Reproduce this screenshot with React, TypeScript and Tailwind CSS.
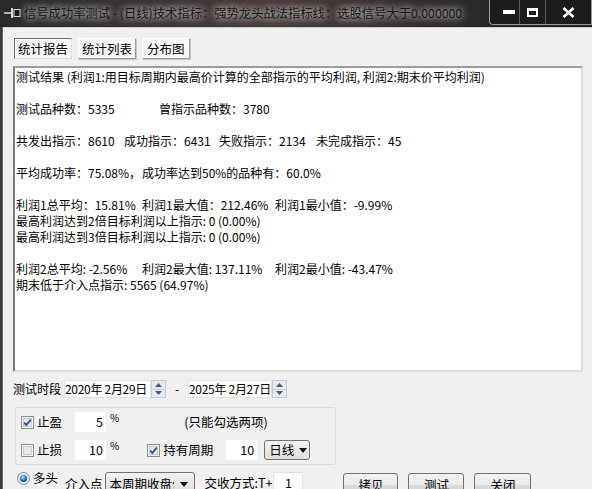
import React from 'react'

const ui = { fontFamily: '"Noto Sans CJK SC", "Noto Sans", sans-serif' }

function Check({ on }: { on: boolean }) {
  return (
    <svg width="13" height="13" viewBox="0 0 13 13" className="shrink-0">
      <rect x="0.5" y="0.5" width="12" height="12" fill="#f4f4f4" stroke="#8e8f8f" />
      <rect x="2.5" y="2.5" width="8" height="8" fill="#e6e9ee" stroke="#c9ccd2" />
      {on && <path d="M3.2 6.6 L5.3 9 L9.8 3.6" fill="none" stroke="#3a4f8c" strokeWidth="1.9" />}
    </svg>
  )
}

function Radio() {
  return (
    <svg width="13" height="13" viewBox="0 0 13 13" className="shrink-0">
      <defs>
        <radialGradient id="rg" cx="0.4" cy="0.35" r="0.6">
          <stop offset="0" stopColor="#bfe6ff" />
          <stop offset="0.6" stopColor="#2a8ad4" />
          <stop offset="1" stopColor="#0f4c8c" />
        </radialGradient>
      </defs>
      <circle cx="6.5" cy="6.5" r="6" fill="#eaeaea" stroke="#8e8f8f" />
      <circle cx="6.5" cy="6.5" r="3.6" fill="url(#rg)" />
    </svg>
  )
}

function Spin() {
  return (
    <div className="flex flex-col w-[15px] h-[18px] border border-[#c4cbd6] bg-[#e6ebf2]">
      <div className="flex-1 flex items-center justify-center border-b border-[#c4cbd6]">
        <svg width="7" height="4" viewBox="0 0 7 4"><path d="M0 4 L3.5 0 L7 4Z" fill="#4b5a78" /></svg>
      </div>
      <div className="flex-1 flex items-center justify-center">
        <svg width="7" height="4" viewBox="0 0 7 4"><path d="M0 0 L3.5 4 L7 0Z" fill="#4b5a78" /></svg>
      </div>
    </div>
  )
}

function Arrow() {
  return (
    <svg width="8" height="5" viewBox="0 0 8 5"><path d="M0 0 L4 5 L8 0Z" fill="#111" /></svg>
  )
}

function Seg({ w, children }: { w?: number; children: React.ReactNode }) {
  return (
    <span className="inline-block whitespace-pre" style={w ? { width: w } : undefined}>
      {children}
    </span>
  )
}

export default function App() {
  return (
    <div className="w-[592px] h-[489px] overflow-hidden flex flex-col bg-[#2b2b2b]" style={ui}>
      {/* title bar */}
      <div className="h-[27px] shrink-0 flex items-start relative bg-[linear-gradient(90deg,#2a2a2a_0%,#3a3434_25%,#4a3a3a_45%,#3a3333_65%,#262626_85%,#1e1e1e_100%)]">
        <div className="flex items-center h-[26px] pl-[4px] gap-[3px]">
          <svg width="17" height="12" viewBox="0 0 17 12">
            <path d="M0 6 H8" stroke="#d8d8d8" strokeWidth="1.5" />
            <path d="M8 1 V11" stroke="#d8d8d8" strokeWidth="2" />
            <rect x="10" y="2.5" width="6" height="7" fill="#1a1a1a" stroke="#d8d8d8" />
          </svg>
          <span className="text-[12.3px] text-[#151515] [text-shadow:0_0_6px_rgba(255,255,255,0.9),0_0_10px_rgba(255,255,255,0.5)] whitespace-nowrap">
            信号成功率测试 - (日线)技术指标：强势龙头战法指标线：选股信号大于0.000000
          </span>
        </div>
        <div className="ml-auto flex h-[25px] border border-t-0 border-[#9a9a9a] rounded-bl-[4px] bg-[#1c1c1c] pl-[8px]">
          <div className="w-[22px] flex items-center justify-center border-r border-[#5a5a5a]">
            <div className="w-[12px] h-[4px] bg-white" />
          </div>
          <div className="w-[26px] flex items-center justify-center border-r border-[#5a5a5a]">
            <div className="w-[11px] h-[9px] border-2 border-white border-t-[3px]" />
          </div>
          <div className="w-[45px] flex items-center justify-center">
            <svg width="13" height="11" viewBox="0 0 13 11">
              <path d="M1.5 1 L11.5 10 M11.5 1 L1.5 10" stroke="#fff" strokeWidth="2.6" />
            </svg>
          </div>
        </div>
      </div>

      {/* body */}
      <div className="flex-1 flex">
        <div className="w-[3px] bg-[#3a3a3a] border-r border-[#6a6a6a]" />
        <div className="flex-1 bg-[#f0f0f0] border-t border-[#cfcfcf] pt-[10px] pl-[10px] pr-[4px] flex flex-col">
          {/* tabs */}
          <div className="flex gap-[6px] pl-[1px] h-[21px] text-[12.5px] leading-[19px] text-black">
            <div className="px-[3px] border border-t-[#6d6d6d] border-l-[#6d6d6d] border-r-[#dcdcdc] border-b-[#dcdcdc] bg-[#f6f6f6]">统计报告</div>
            <div className="px-[3px] border border-t-white border-l-white border-r-[#9a9a9a] border-b-[#9a9a9a] bg-[#f7f7f7] shadow-[1px_1px_0_#c8c8c8]">统计列表</div>
            <div className="px-[4px] border border-t-white border-l-white border-r-[#9a9a9a] border-b-[#9a9a9a] bg-[#f7f7f7] shadow-[1px_1px_0_#c8c8c8]">分布图</div>
          </div>

          {/* report text */}
          <div className="mt-[7px] w-[570px] h-[306px] bg-white border-2 border-t-[#9c9c9c] border-l-[#7a7a7a] border-r-[#dedede] border-b-[#dedede] pl-[1px] pt-[1px] text-[12px] leading-[16px] text-black overflow-hidden">
            <div><Seg>测试结果 (利润1:用目标周期内最高价计算的全部指示的平均利润, 利润2:期末价平均利润)</Seg></div>
            <div>&nbsp;</div>
            <div><Seg w={143}>测试品种数：5335</Seg><Seg>曾指示品种数：3780</Seg></div>
            <div>&nbsp;</div>
            <div><Seg w={108}>共发出指示：8610</Seg><Seg w={95}>成功指示：6431</Seg><Seg w={97}>失败指示：2134</Seg><Seg>未完成指示：45</Seg></div>
            <div>&nbsp;</div>
            <div><Seg w={126}>平均成功率：75.08%，</Seg><Seg>成功率达到50%的品种有：60.0%</Seg></div>
            <div>&nbsp;</div>
            <div><Seg w={126}>利润1总平均：15.81%</Seg><Seg w={133}>利润1最大值：212.46%</Seg><Seg>利润1最小值：-9.99%</Seg></div>
            <div><Seg>最高利润达到2倍目标利润以上指示: 0 (0.00%)</Seg></div>
            <div><Seg>最高利润达到3倍目标利润以上指示: 0 (0.00%)</Seg></div>
            <div>&nbsp;</div>
            <div><Seg w={126}>利润2总平均: -2.56%</Seg><Seg w={133}>利润2最大值: 137.11%</Seg><Seg>利润2最小值: -43.47%</Seg></div>
            <div><Seg>期末低于介入点指示: 5565 (64.97%)</Seg></div>
          </div>

          {/* date range */}
          <div className="mt-[8px] flex items-center h-[18px] text-[12px] text-black">
            <span className="w-[51px] whitespace-nowrap">测试时段</span>
            <div className="w-[87px] h-[18px] bg-white border border-[#e2e2e2] leading-[16px] text-[12px] tracking-[-0.3px] whitespace-pre overflow-hidden">2020年 2月29日</div>
            <Spin />
            <span className="w-[22px] text-center">-</span>
            <div className="w-[84px] h-[18px] bg-white border border-[#e2e2e2] leading-[16px] text-[12px] tracking-[-0.3px] whitespace-pre overflow-hidden">2025年 2月27日</div>
            <Spin />
          </div>

          {/* options group */}
          <div className="mt-[9px] ml-[2px] w-[321px] h-[58px] border border-[#d5dbe0] rounded-[3px] flex flex-col text-[12.5px] text-black">
            <div className="flex items-center h-[20px] mt-[4px]">
              <div className="ml-[5px]"><Check on /></div>
              <span className="ml-[3px] w-[38px]">止盈</span>
              <div className="w-[31px] h-[20px] bg-white text-right pr-[3px] leading-[20px]">5</div>
              <span className="ml-[4px] self-start text-[10px] leading-[12px]">%</span>
              <span className="ml-[65px]">(只能勾选两项)</span>
            </div>
            <div className="flex items-center h-[20px] mt-[8px]">
              <div className="ml-[5px]"><Check on={false} /></div>
              <span className="ml-[3px] w-[38px]">止损</span>
              <div className="w-[31px] h-[20px] bg-white text-right pr-[3px] leading-[20px]">10</div>
              <span className="ml-[4px] self-start text-[10px] leading-[12px]">%</span>
              <div className="ml-[28px]"><Check on /></div>
              <span className="ml-[3px] w-[63px]">持有周期</span>
              <div className="w-[31px] h-[20px] bg-white text-right pr-[3px] leading-[20px]">10</div>
              <div className="ml-[7px] w-[46px] h-[20px] border border-[#707070] rounded-[3px] bg-[linear-gradient(#f2f2f2,#e0e0e0)] flex items-center pl-[4px] gap-[5px]">
                <span>日线</span>
                <Arrow />
              </div>
            </div>
          </div>

          {/* bottom row */}
          <div className="mt-[6px] flex items-start text-[12.5px] text-black">
            <div className="ml-[4px] mt-[1px]"><Radio /></div>
            <span className="ml-[3px] leading-[14px]">多头</span>
            <span className="ml-[7px] mt-[5px] leading-[16px]">介入点</span>
            <div className="ml-[2px] mt-[1px] w-[90px] h-[22px] border border-[#707070] rounded-[3px] bg-[linear-gradient(#f2f2f2,#dcdcdc)] flex items-center">
              <span className="w-[68px] overflow-hidden whitespace-nowrap pl-[4px] pt-[2px]">本周期收盘价</span>
              <div className="flex-1 flex justify-center pt-[2px]"><Arrow /></div>
            </div>
            <span className="ml-[10px] mt-[4px] leading-[16px] whitespace-nowrap">交收方式:T+</span>
            <div className="ml-[1px] mt-[1px] w-[30px] h-[20px] bg-white border border-[#e2e2e2] text-center leading-[20px]">1</div>
            <div className="ml-[40px] mt-[2px] flex gap-[10px]">
              <div className="w-[55px] h-[23px] border border-[#707070] rounded-[3px] bg-[linear-gradient(#f2f2f2_0%,#ebebeb_50%,#dddddd_51%,#cfcfcf_100%)] text-center leading-[22px]">拷贝</div>
              <div className="w-[56px] h-[23px] border border-[#707070] rounded-[3px] bg-[linear-gradient(#f2f2f2_0%,#ebebeb_50%,#dddddd_51%,#cfcfcf_100%)] text-center leading-[22px]">测试</div>
              <div className="w-[57px] h-[23px] border border-[#707070] rounded-[3px] bg-[linear-gradient(#f2f2f2_0%,#ebebeb_50%,#dddddd_51%,#cfcfcf_100%)] text-center leading-[22px]">关闭</div>
            </div>
          </div>
        </div>
      </div>
    </div>
  )
}
